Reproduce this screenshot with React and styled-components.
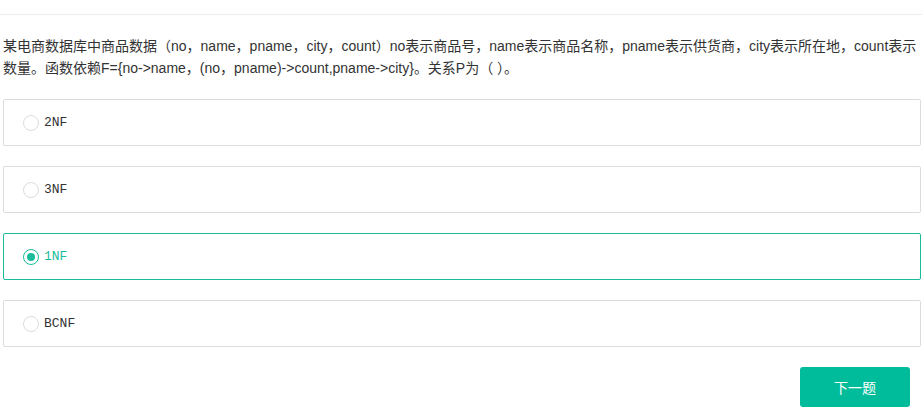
import React, { useState } from "react";
import styled, { createGlobalStyle } from "styled-components";

const Global = createGlobalStyle`
  html, body { margin: 0; padding: 0; background: #fff; }
  body { font-family: "Liberation Sans", "Noto Sans CJK SC", sans-serif; }
`;

const Page = styled.div`
  width: 922px;
  box-sizing: border-box;
`;

const TopBar = styled.div`
  height: 14px;
  border-bottom: 1px solid #ececec;
`;

const Content = styled.div`
  padding: 20px 1px 0 3px;
`;

const Question = styled.p`
  margin: 0;
  font-size: 14px;
  line-height: 22px;
  color: #333;
`;

const Options = styled.div`
  display: flex;
  flex-direction: column;
  gap: 20px;
  margin-top: 20px;
`;

const Option = styled.label`
  display: flex;
  align-items: center;
  height: 47px;
  box-sizing: border-box;
  padding-left: 19px;
  border: 1px solid ${(p) => (p.$active ? "#1abc9c" : "#dcdcdc")};
  border-radius: 2px;
  cursor: pointer;
  gap: 5px;
`;

const Radio = styled.span`
  width: 16px;
  height: 16px;
  box-sizing: border-box;
  border-radius: 50%;
  border: 1px solid ${(p) => (p.$active ? "#1abc9c" : "#dcdcdc")};
  display: flex;
  align-items: center;
  justify-content: center;
  &::after {
    content: "";
    display: ${(p) => (p.$active ? "block" : "none")};
    width: 8px;
    height: 8px;
    border-radius: 50%;
    background: #1abc9c;
  }
`;

const Label = styled.span`
  font-family: "Liberation Mono", "Courier New", monospace;
  font-size: 13px;
  color: ${(p) => (p.$active ? "#1abc9c" : "#333")};
`;

const Footer = styled.div`
  display: flex;
  justify-content: flex-end;
  padding: 20px 11px 0 0;
`;

const NextButton = styled.button`
  width: 110px;
  height: 40px;
  border: none;
  border-radius: 3px;
  background: #00bc9b;
  color: #fff;
  font-family: "Liberation Sans", "Noto Sans CJK SC", sans-serif;
  font-size: 14px;
  cursor: pointer;
`;

const OPTIONS = ["2NF", "3NF", "1NF", "BCNF"];

export default function App() {
  const [sel, setSel] = useState(2);
  return (
    <Page>
      <Global />
      <TopBar />
      <Content>
        <Question>
          某电商数据库中商品数据（no，name，pname，city，count）no表示商品号，name表示商品名称，pname表示供货商，city表示所在地，count表示数量。函数依赖F={"{"}no-&gt;name，(no，pname)-&gt;count,pname-&gt;city{"}"}。关系P为（ ）。
        </Question>
        <Options>
          {OPTIONS.map((o, i) => (
            <Option key={o} $active={sel === i} onClick={() => setSel(i)}>
              <Radio $active={sel === i} />
              <Label $active={sel === i}>{o}</Label>
            </Option>
          ))}
        </Options>
        <Footer>
          <NextButton>下一题</NextButton>
        </Footer>
      </Content>
    </Page>
  );
}
